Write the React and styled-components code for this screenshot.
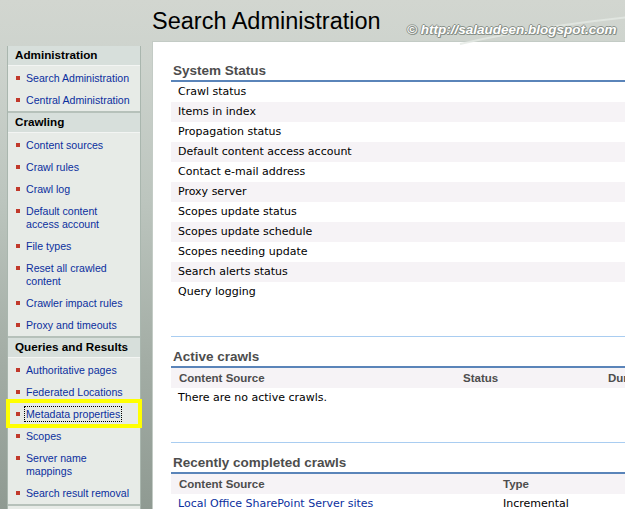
import React from "react";
import styled, { createGlobalStyle } from "styled-components";

const GlobalStyle = createGlobalStyle`
  html, body {
    margin: 0;
    padding: 0;
    overflow: hidden;
  }
  body {
    width: 625px;
    height: 509px;
    background: linear-gradient(
      to bottom,
      #d2d6d0 0px,
      #cdd3cd 60px,
      #bcc5be 200px,
      #a3ada5 360px,
      #8f9a92 509px
    );
  }
`;

const Page = styled.div`
  position: relative;
  width: 900px;
  height: 509px;
`;

const Header = styled.div`
  position: relative;
  height: 41px;
  padding-left: 152px;
  box-sizing: border-box;
`;

const Title = styled.h1`
  margin: 0;
  padding-top: 8px;
  font-family: "Liberation Sans", Arial, sans-serif;
  font-weight: normal;
  font-size: 23.5px;
  line-height: 27px;
  color: #000;
`;

const Watermark = styled.span`
  position: absolute;
  left: 407px;
  top: 22px;
  font-family: "Liberation Sans", Arial, sans-serif;
  font-weight: bold;
  font-style: italic;
  font-size: 13.5px;
  color: #fff;
  text-shadow: -1px 0 #899189, 1px 0 #899189, 0 -1px #899189, 0 1px #899189,
    1px 1px #899189;
  white-space: nowrap;
`;

const Swoosh = styled.svg`
  position: absolute;
  left: 440px;
  top: 10px;
`;

const Main = styled.div`
  display: flex;
  align-items: flex-start;
`;

const Nav = styled.div`
  margin: 5px 0 0 7px;
  width: 134px;
  box-sizing: border-box;
  border-left: 1px solid #a9b6ae;
  border-right: 1px solid #a9b6ae;
  background: #e7ebe7;
  font-family: "Liberation Sans", Arial, sans-serif;
`;

const Section = styled.div`
  border-top: ${(p) => (p.$first ? "none" : "2px solid #b6c1ba")};
`;

const SectionHead = styled.div`
  height: 19px;
  line-height: 18px;
  padding-left: 7px;
  background: #d7dfdb;
  border-bottom: 1px solid #f3f5f3;
  font-weight: bold;
  font-size: 11.7px;
  color: #000;
`;

const Items = styled.ul`
  list-style: none;
  margin: 0;
  padding: 0 0 1px 0;
`;

const Item = styled.li`
  position: relative;
  padding: 5.5px 8px 3.5px 18px;
  font-size: 10.6px;
  line-height: 13px;

  &::before {
    content: "";
    position: absolute;
    left: 8px;
    top: 10px;
    width: 4px;
    height: 4px;
    background: #c1392b;
  }
`;

const NavLink = styled.a`
  color: #0b2f9e;
  text-decoration: none;
  outline: ${(p) => (p.$focused ? "1px dotted #000" : "none")};
  outline-offset: 1px;
`;

const Highlight = styled.span`
  position: absolute;
  left: -2px;
  right: -2px;
  top: -3px;
  bottom: -4px;
  border: 4px solid #ffff00;
  pointer-events: none;
`;

const NavFoot = styled.div`
  height: 12px;
  border-top: 2px solid #b6c1ba;
  background: #e7ebe7;
`;

const Content = styled.div`
  margin-left: 11px;
  flex: 1;
  height: 468px;
  background: #fff;
  border-left: 1px solid #c3cbc5;
  border-top: 1px solid #c3cbc5;
  padding: 20px 0 0 18px;
  box-sizing: border-box;
`;

const Block = styled.div`
  margin-bottom: 34px;
`;

const BlockTitle = styled.div`
  height: 18px;
  line-height: 18px;
  padding-left: 2px;
  border-bottom: 2px solid #5a84b9;
  font-family: "Liberation Sans", Arial, sans-serif;
  font-weight: bold;
  font-size: 13.5px;
  color: #4d4d4d;
`;

const Row = styled.div`
  display: grid;
  grid-template-columns: ${(p) => p.$cols || "1fr"};
  height: 20px;
  line-height: 20px;
  padding-left: ${(p) => (p.$head ? "8px" : "7px")};
  background: ${(p) => (p.$tint ? "#f6f3f6" : "#fff")};
  font-family: ${(p) =>
    p.$head
      ? '"Liberation Sans", Arial, sans-serif'
      : '"DejaVu Sans", Verdana, sans-serif'};
  font-weight: ${(p) => (p.$head ? "bold" : "normal")};
  font-size: ${(p) => (p.$head ? "11.5px" : "11px")};
  color: ${(p) => (p.$head ? "#4d4d4d" : "#000")};
  white-space: nowrap;
`;

const Cell = styled.span``;

const TableLink = styled.a`
  color: #0b2f9e;
  text-decoration: none;
`;

const Separator = styled.div`
  height: 1px;
  background: #a9cdf1;
  margin-bottom: 11px;
`;

const navSections = [
  {
    title: "Administration",
    items: ["Search Administration", "Central Administration"],
  },
  {
    title: "Crawling",
    items: [
      "Content sources",
      "Crawl rules",
      "Crawl log",
      "Default content access account",
      "File types",
      "Reset all crawled content",
      "Crawler impact rules",
      "Proxy and timeouts",
    ],
  },
  {
    title: "Queries and Results",
    items: [
      "Authoritative pages",
      "Federated Locations",
      "Metadata properties",
      "Scopes",
      "Server name mappings",
      "Search result removal",
    ],
  },
];

const statusRows = [
  "Crawl status",
  "Items in index",
  "Propagation status",
  "Default content access account",
  "Contact e-mail address",
  "Proxy server",
  "Scopes update status",
  "Scopes update schedule",
  "Scopes needing update",
  "Search alerts status",
  "Query logging",
];

const App = () => {
  return (
    <>
      <GlobalStyle />
      <Page>
        <Header>
          <Title>Search Administration</Title>
          <Swoosh width="200" height="35" viewBox="0 0 200 35">
            <path
              d="M20 34 C 80 20, 140 12, 200 6"
              stroke="#e4e8e3"
              strokeWidth="2"
              fill="none"
              opacity="0.8"
            />
          </Swoosh>
          <Watermark>© http://salaudeen.blogspot.com</Watermark>
        </Header>
        <Main>
          <Nav>
            {navSections.map((s, i) => (
              <Section key={s.title} $first={i === 0}>
                <SectionHead>{s.title}</SectionHead>
                <Items>
                  {s.items.map((it) => (
                    <Item key={it}>
                      <NavLink href="#" $focused={it === "Metadata properties"}>
                        {it}
                      </NavLink>
                      {it === "Metadata properties" && <Highlight />}
                    </Item>
                  ))}
                </Items>
              </Section>
            ))}
            <NavFoot />
          </Nav>
          <Content>
            <Block>
              <BlockTitle>System Status</BlockTitle>
              {statusRows.map((r, i) => (
                <Row key={r} $tint={i % 2 === 1}>
                  <Cell>{r}</Cell>
                </Row>
              ))}
            </Block>
            <Separator />
            <Block>
              <BlockTitle>Active crawls</BlockTitle>
              <Row $head $tint $cols="284px 145px 1fr">
                <Cell>Content Source</Cell>
                <Cell>Status</Cell>
                <Cell>Duration</Cell>
              </Row>
              <Row>
                <Cell>There are no active crawls.</Cell>
              </Row>
            </Block>
            <Separator />
            <Block>
              <BlockTitle>Recently completed crawls</BlockTitle>
              <Row $head $tint $cols="324px 1fr">
                <Cell>Content Source</Cell>
                <Cell>Type</Cell>
              </Row>
              <Row $cols="325px 1fr">
                <Cell>
                  <TableLink href="#">Local Office SharePoint Server sites</TableLink>
                </Cell>
                <Cell>Incremental</Cell>
              </Row>
            </Block>
          </Content>
        </Main>
      </Page>
    </>
  );
};

export default App;
